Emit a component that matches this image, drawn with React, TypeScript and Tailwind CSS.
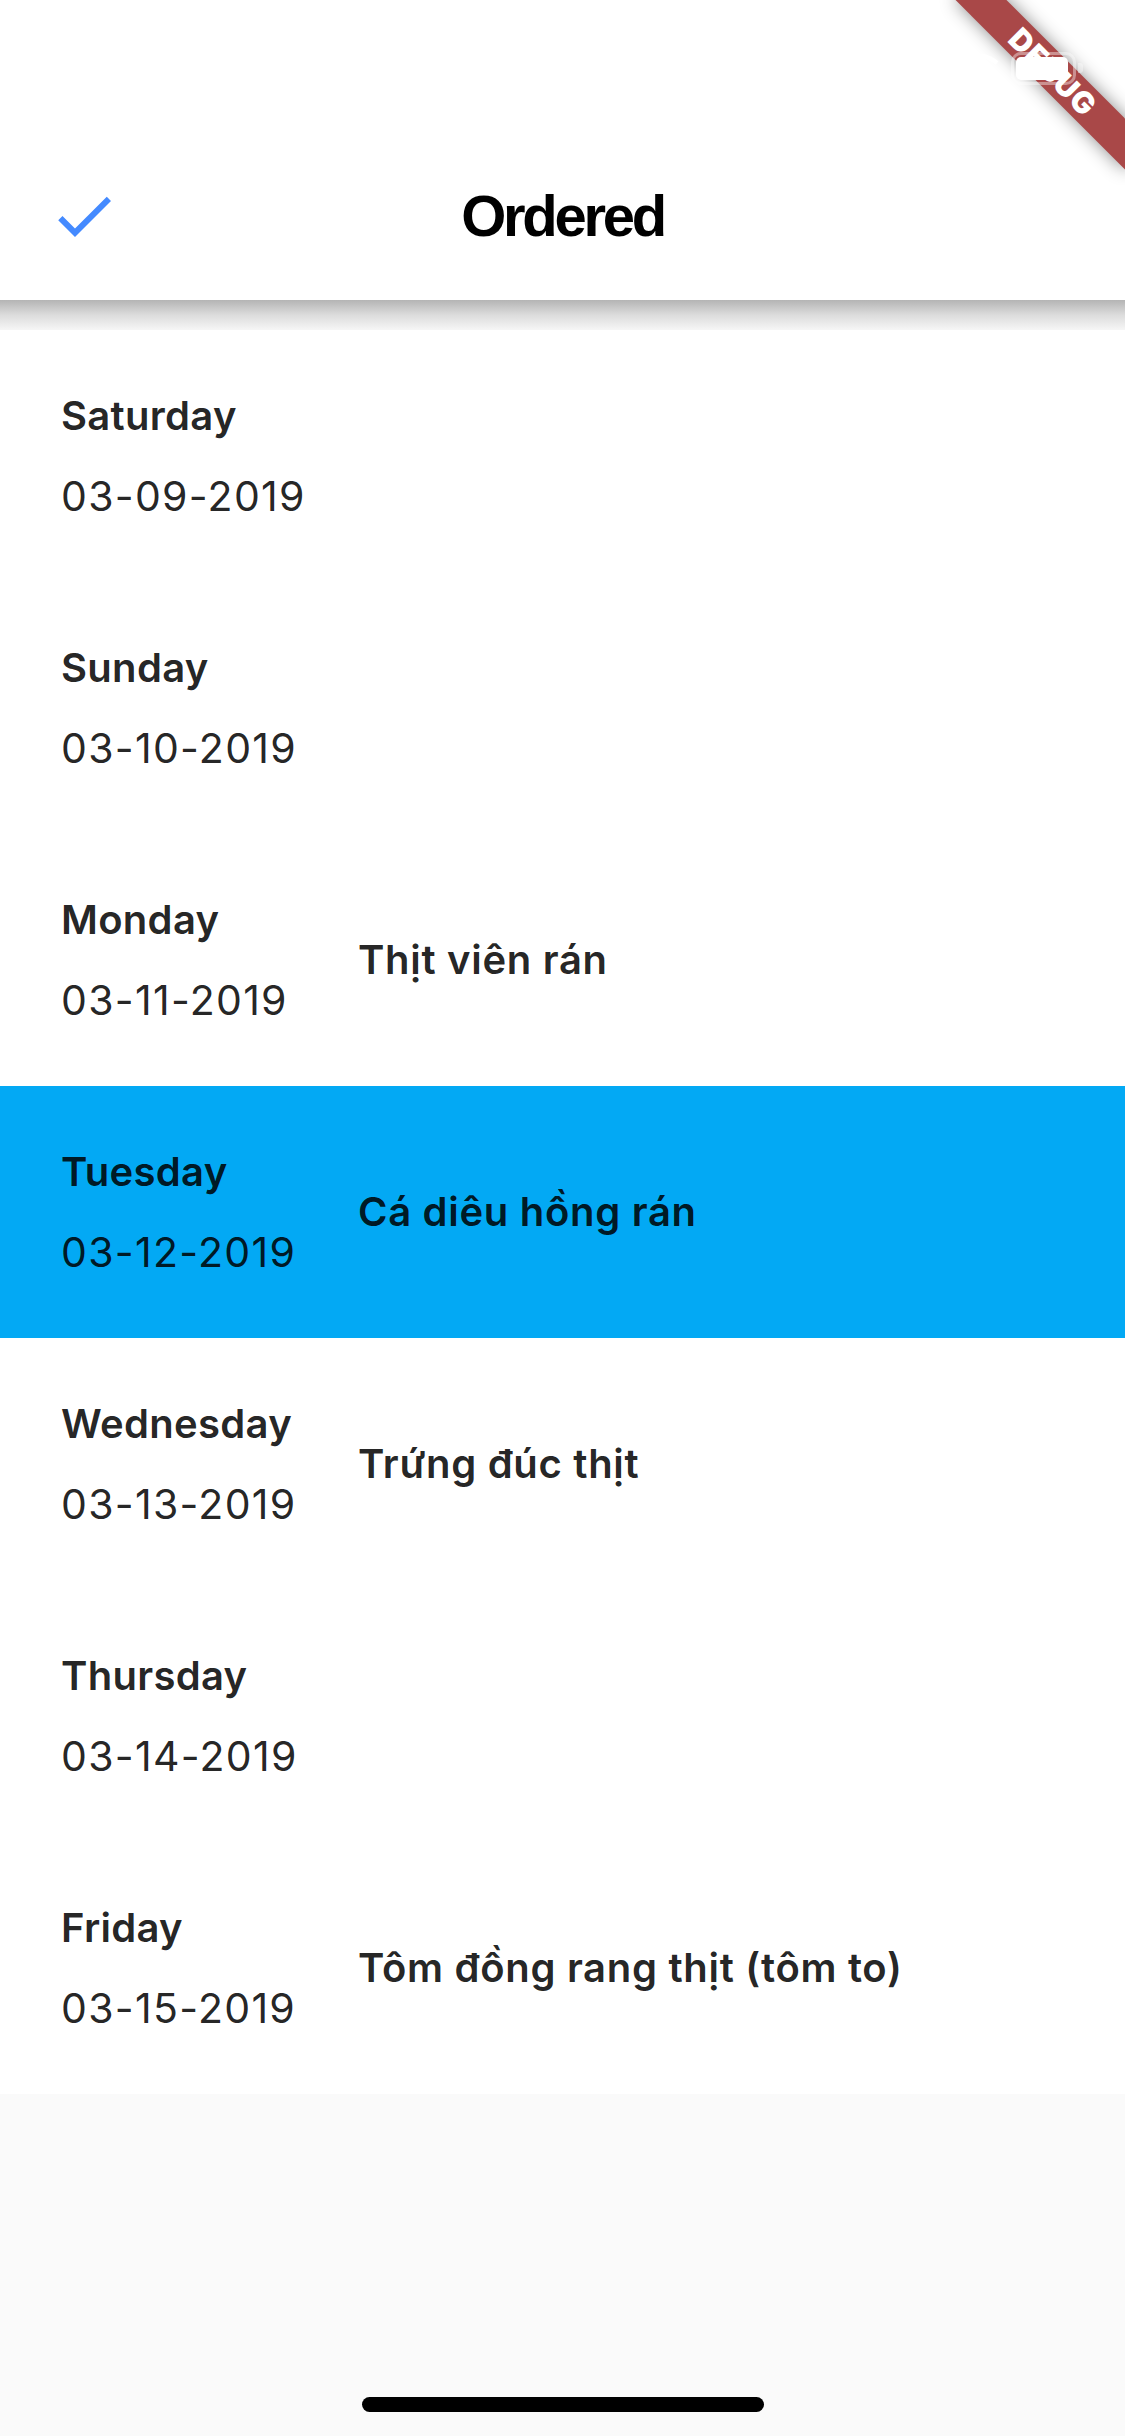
import React from "react";

type Row = { day: string; date: string; food: string; active?: boolean };

const rows: Row[] = [
  { day: "Saturday", date: "03-09-2019", food: "" },
  { day: "Sunday", date: "03-10-2019", food: "" },
  { day: "Monday", date: "03-11-2019", food: "Thịt viên rán" },
  { day: "Tuesday", date: "03-12-2019", food: "Cá diêu hồng rán", active: true },
  { day: "Wednesday", date: "03-13-2019", food: "Trứng đúc thịt" },
  { day: "Thursday", date: "03-14-2019", food: "" },
  { day: "Friday", date: "03-15-2019", food: "Tôm đồng rang thịt (tôm to)" },
];

function CheckIcon() {
  return (
    <svg width="72" height="72" viewBox="0 0 24 24" fill="#448AFF">
      <path d="M9 16.17L4.83 12l-1.42 1.41L9 19 21 7l-1.41-1.41z" />
    </svg>
  );
}

function DayRow({ row }: { row: Row }) {
  return (
    <div
      className={`flex h-[252px] items-center pl-[61px] ${row.active ? "bg-[#03A9F4]" : "bg-white"}`}
    >
      <div className="flex w-[297px] shrink-0 flex-col gap-[40px]">
        <div className="text-[40px] leading-[40px] font-semibold tracking-[0.3px] text-[rgba(0,0,0,0.87)]">{row.day}</div>
        <div className="text-[41px] leading-[41px] font-normal tracking-[1.3px] text-[rgba(0,0,0,0.87)]">{row.date}</div>
      </div>
      <div className="text-[40px] leading-[40px] font-semibold tracking-[0.7px] text-[rgba(0,0,0,0.87)]">{row.food}</div>
    </div>
  );
}

export default function App() {
  return (
    <div
      className="relative flex h-[2436px] w-[1125px] flex-col overflow-hidden bg-[#fafafa]"
      style={{ fontFamily: "Inter, 'Noto Sans', sans-serif" }}
    >
      {/* Header */}
      <header className="flex h-[300px] shrink-0 flex-col bg-white">
        <div className="h-[132px]" />
        <div className="flex h-[168px] items-center">
          <div className="flex w-[168px] items-center pl-[48px]">
            <CheckIcon />
          </div>
          <div
            className="flex-1 text-center text-[58px] leading-[58px] font-bold tracking-[-3.3px] text-black"
            style={{ fontFamily: "'Liberation Sans', Arial, sans-serif" }}
          >
            Ordered
          </div>
          <div className="w-[168px]" />
        </div>
      </header>
      <div className="h-[30px] shrink-0 bg-linear-to-b from-[#b4b4b4] via-[#dcdcdc] to-[#f6f6f6]" />

      {/* List */}
      <div className="flex flex-col">
        {rows.map((r) => (
          <DayRow key={r.date} row={r} />
        ))}
      </div>

      <div className="flex-1" />

      {/* Home indicator */}
      <div className="flex justify-center pb-[24px]">
        <div className="h-[15px] w-[402px] rounded-full bg-black" />
      </div>

      {/* Debug banner */}
      <div className="absolute left-[933px] top-[54px] flex h-[36px] w-[240px] rotate-45 items-center justify-center bg-[#a94848] shadow-[0_0_18px_rgba(0,0,0,0.45)]">
        <span className="text-[30px] leading-[30px] font-black tracking-[1px] text-white">DEBUG</span>
      </div>

      {/* Status bar icons (white) */}
      <svg className="absolute left-[955px] top-[50px]" width="46" height="34" viewBox="0 0 46 34">
        <path d="M23 8c7 0 13 2.6 17.5 6.8l3-3.2C38.2 6.6 31 3.5 23 3.5S7.8 6.6 2.5 11.6l3 3.2C10 10.6 16 8 23 8z" fill="white" />
        <path d="M23 16c4.6 0 8.8 1.7 12 4.5l3-3.2C34 13.8 28.8 11.6 23 11.6S12 13.8 8 17.3l3 3.2C14.2 17.7 18.4 16 23 16z" fill="white" />
        <path d="M23 23.5c2.4 0 4.6.9 6.3 2.4L23 32.5l-6.3-6.6c1.7-1.5 3.9-2.4 6.3-2.4z" fill="white" />
      </svg>
      <div className="absolute left-[1011px] top-[52px] h-[33px] w-[65px] rounded-[10px] border-[3px] border-white/40" />
      <div className="absolute left-[1016px] top-[57px] h-[23px] w-[52px] rounded-[5px] bg-white" />
      <div className="absolute left-[1078px] top-[63px] h-[10px] w-[5px] rounded-r-[3px] bg-white/40" />
    </div>
  );
}
